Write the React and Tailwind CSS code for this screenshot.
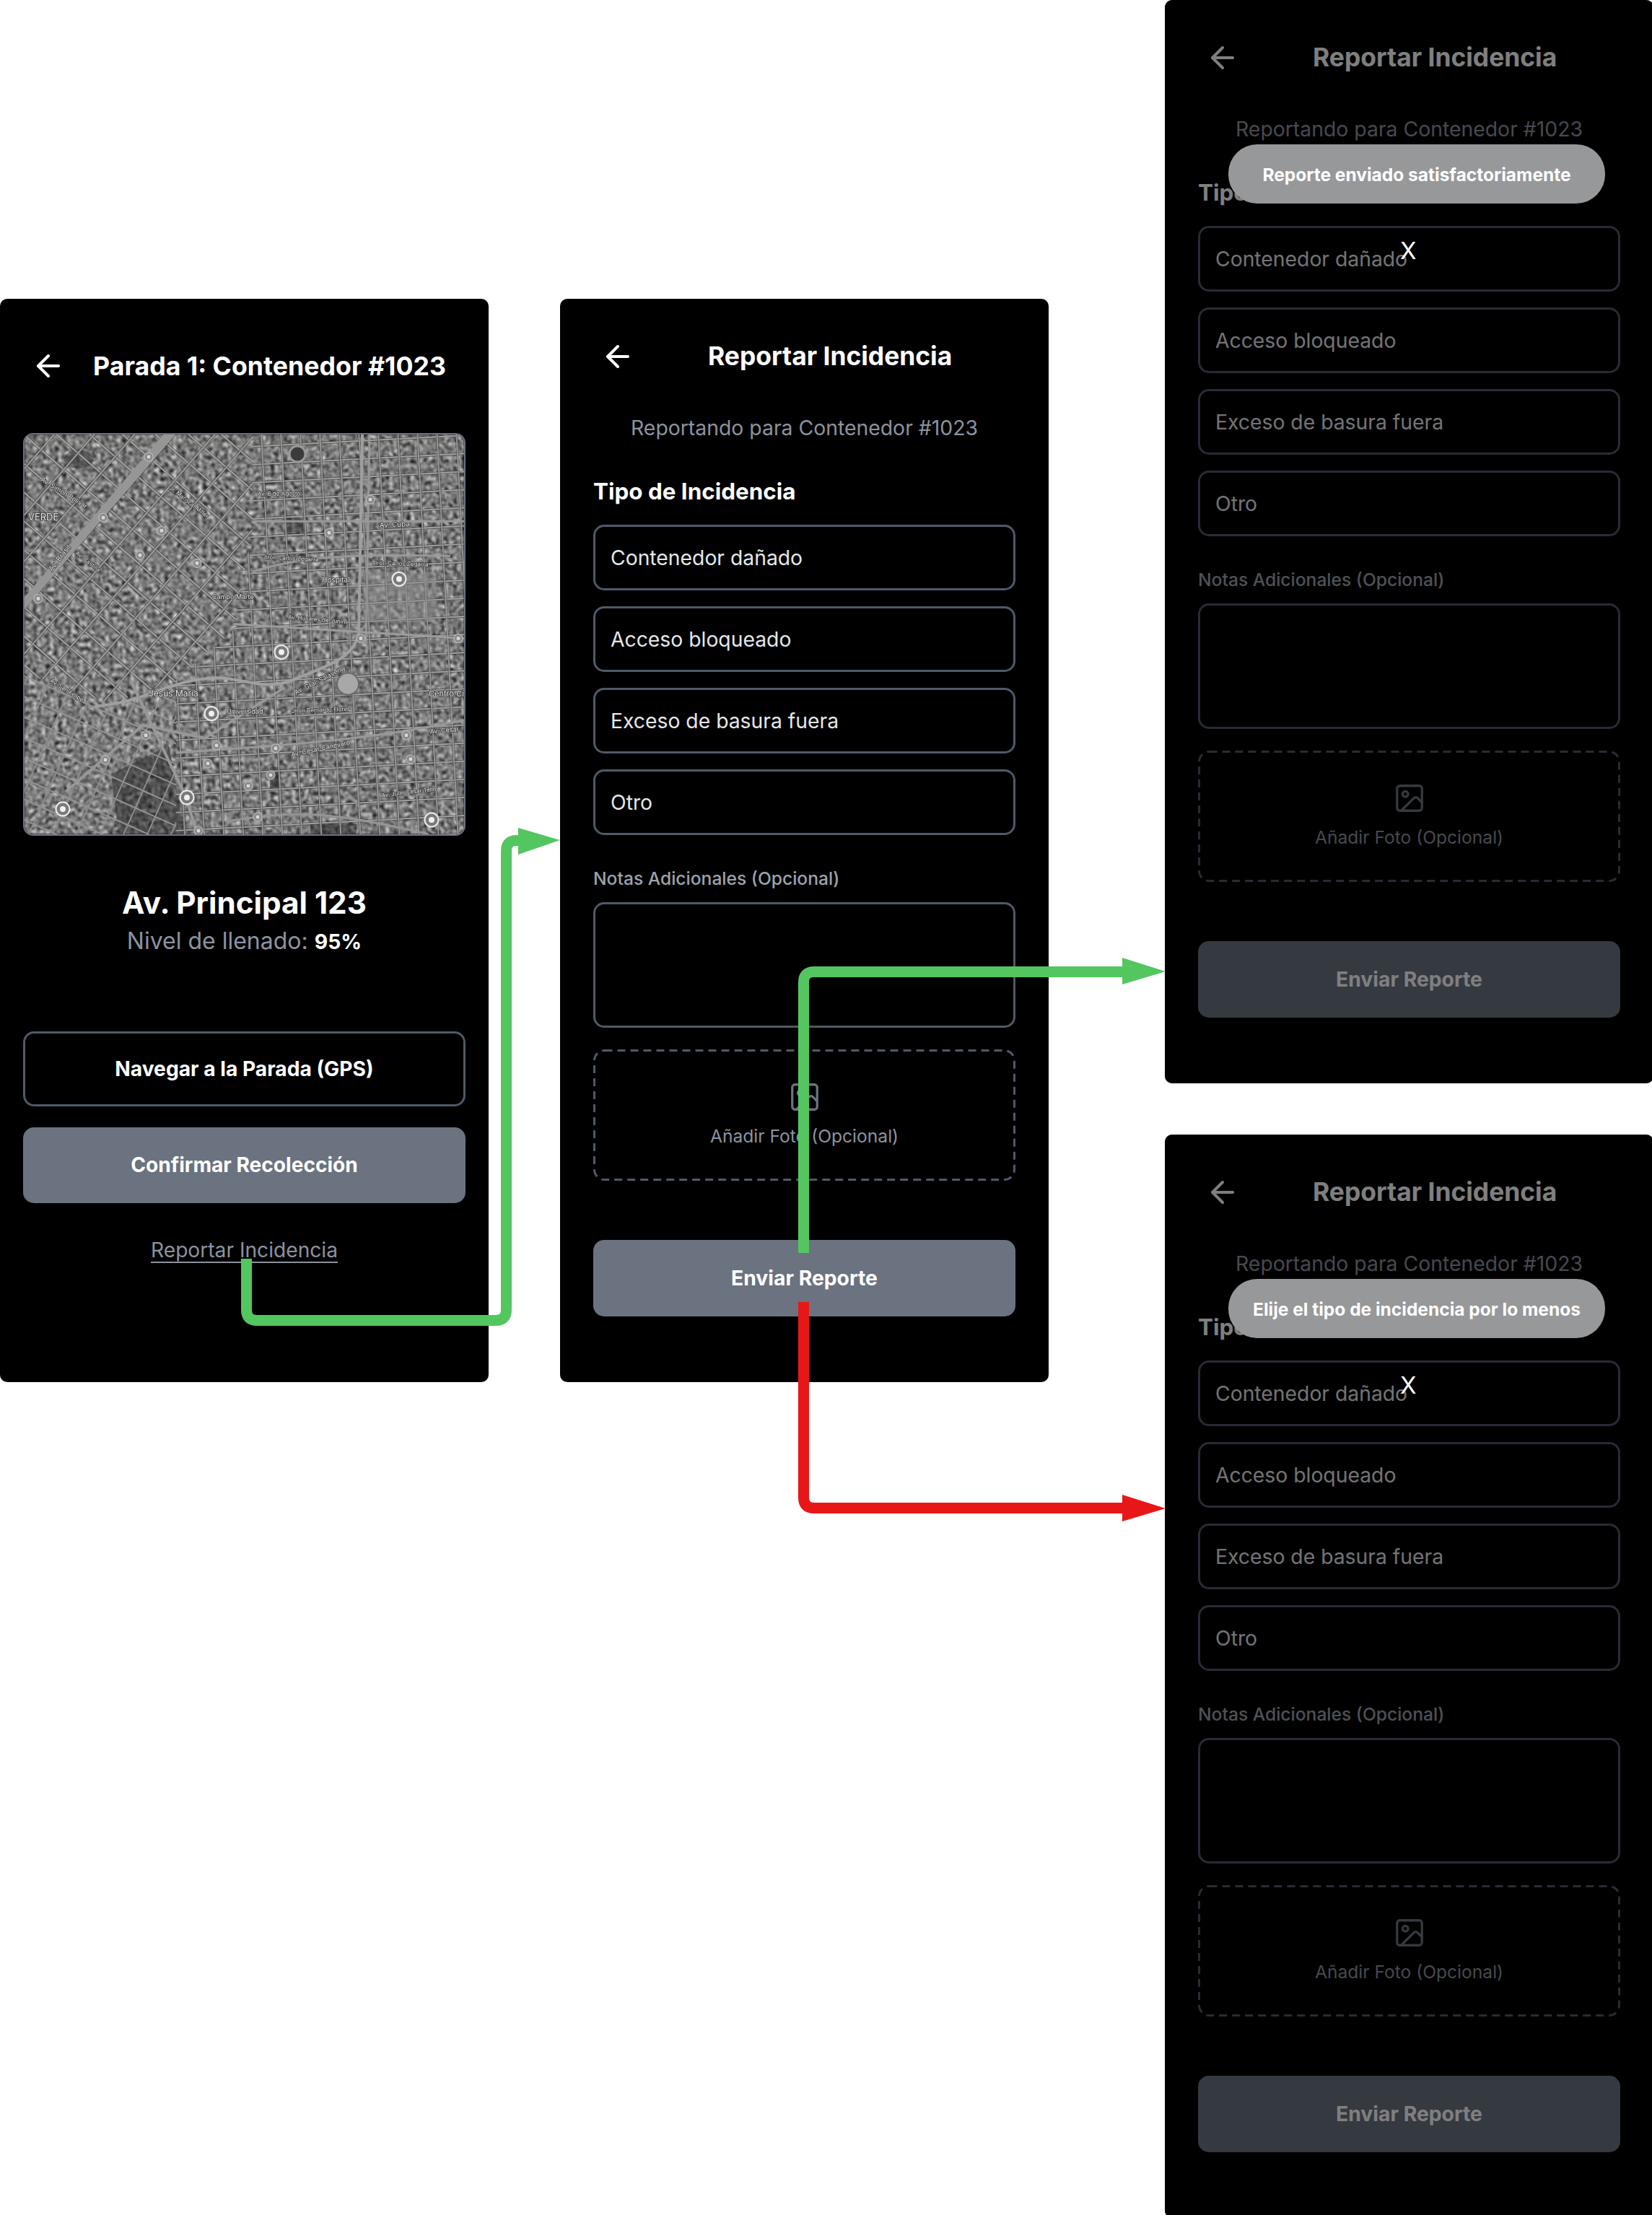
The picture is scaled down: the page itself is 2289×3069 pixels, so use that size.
import React from "react";
import { ArrowLeft, Image as ImageIcon } from "lucide-react";

const range = (a, b, s) => {
  const out = [];
  for (let v = a; v <= b; v += s) out.push(v);
  return out;
};

const bigPins = [[356, 301], [259, 386], [225, 502], [53, 518], [564, 533], [519, 200]];
const smallPins = [
  [172, 31], [109, 115], [190, 133], [160, 167], [239, 178], [19, 227], [479, 90], [422, 136], [466, 282],
  [601, 282], [168, 416], [266, 430], [348, 434], [254, 455], [341, 471], [310, 486], [323, 529], [241, 548],
  [112, 450], [529, 416], [535, 449],
];
const labels = [
  ["VERDE", 5, 119, 0, 13],
  ["Av. Brasil", 38, 190, -52, 10],
  ["Av. Simón Bolívar", 22, 64, 32, 9],
  ["Av. Castilla", 70, 165, 38, 8],
  ["Jr. Mariscal Miller", 200, 75, 38, 8],
  ["Av. 6 de Agosto", 323, 85, 0, 8],
  ["Jirón Carlos Zegarra", 330, 172, 3, 8],
  ["Jirón Carlos Zegarra", 482, 180, 2, 8],
  ["Av. Cuba", 492, 129, -3, 10],
  ["Av. Húsares de Junín", 365, 255, 5, 8],
  ["Jesús María", 172, 362, 0, 12],
  ["Av. San Felipe", 35, 342, 32, 8],
  ["Av. Gral. Salaverry", 376, 360, -27, 9],
  ["Jirón Bernardo Flores", 370, 385, -2, 8],
  ["Av. César Canevaro", 370, 446, -12, 9],
  ["Av. César", 562, 414, -5, 9],
  ["Av. Julio César Tello", 495, 502, -7, 8],
  ["Centro Cí", 560, 362, 0, 11],
  ["Campo Marte", 260, 228, 0, 9],
  ["Universidad", 280, 386, 0, 9],
  ["Hospital", 412, 205, 0, 10],
];

function CityMap() {
  return (
    <svg viewBox="0 0 609 553" className="block w-full h-full" preserveAspectRatio="none">
      <defs>
        <filter id="blocks" x="0" y="0" width="100%" height="100%" colorInterpolationFilters="sRGB">
          <feTurbulence type="fractalNoise" baseFrequency="0.17" numOctaves="2" seed="23" />
          <feColorMatrix values="0.78 0.78 0 0 -0.3  0.78 0.78 0 0 -0.3  0.78 0.78 0 0 -0.3  0 0 0 0 1" />
          <feGaussianBlur stdDeviation="1" />
        </filter>
        <filter id="soft" x="-5%" y="-5%" width="110%" height="110%">
          <feGaussianBlur stdDeviation="0.45" />
        </filter>
        <clipPath id="west">
          <polygon points="0,0 316,0 316,130 290,270 210,340 120,372 0,330" />
        </clipPath>
        <clipPath id="east">
          <polygon points="316,0 609,0 609,553 210,553 210,340 290,270 316,130" />
        </clipPath>
        <clipPath id="south">
          <polygon points="0,330 120,372 210,340 210,553 0,553" />
        </clipPath>
      </defs>
      <rect width="609" height="553" fill="#777" filter="url(#blocks)" />
      <g fill="#1d1d1d" opacity="0.45" filter="url(#soft)">
        <ellipse cx="75" cy="34" rx="20" ry="13" fill="#2f2f2f" opacity="1" />
        <polygon points="120,470 200,430 222,553 130,553" />
        <rect x="396" y="538" width="64" height="18" />
        <rect x="340" y="460" width="14" height="32" />
        <rect x="362" y="115" width="24" height="20" />
      </g>
      <g filter="url(#soft)" fill="none">
        <g clipPath="url(#west)">
          <g transform="rotate(41 160 180)">
            {range(-300, 700, 30).map((v) => (
              <g key={`a${v}`}>
                <line x1="-300" x2="700" y1={v} y2={v} stroke="#2f2f2f" strokeWidth="4" opacity="0.5" />
                <line x1="-300" x2="700" y1={v} y2={v} stroke="#a0a0a0" strokeWidth="2.2" />
              </g>
            ))}
            {range(-300, 700, 42).map((v) => (
              <g key={`b${v}`}>
                <line y1="-300" y2="700" x1={v} x2={v} stroke="#2f2f2f" strokeWidth="4" opacity="0.5" />
                <line y1="-300" y2="700" x1={v} x2={v} stroke="#9a9a9a" strokeWidth="2.2" />
              </g>
            ))}
          </g>
        </g>
        <g clipPath="url(#east)">
          <g transform="rotate(-3 450 280)">
            {range(-40, 620, 25).map((v) => (
              <g key={`c${v}`}>
                <line x1="100" x2="720" y1={v} y2={v} stroke="#2f2f2f" strokeWidth="3.8" opacity="0.5" />
                <line x1="100" x2="720" y1={v} y2={v} stroke="#a0a0a0" strokeWidth="2" />
              </g>
            ))}
            {range(100, 720, 27).map((v) => (
              <g key={`d${v}`}>
                <line y1="-50" y2="620" x1={v} x2={v} stroke="#2f2f2f" strokeWidth="3.6" opacity="0.5" />
                <line y1="-50" y2="620" x1={v} x2={v} stroke="#989898" strokeWidth="1.9" />
              </g>
            ))}
          </g>
        </g>
        <g clipPath="url(#south)">
          <g transform="rotate(24 100 440)">
            {range(280, 640, 26).map((v) => (
              <line key={`e${v}`} x1="-200" x2="420" y1={v} y2={v} stroke="#949494" strokeWidth="2" />
            ))}
            {range(-180, 400, 30).map((v) => (
              <line key={`f${v}`} y1="200" y2="700" x1={v} x2={v} stroke="#8e8e8e" strokeWidth="2" />
            ))}
          </g>
        </g>
        <path d="M205 -6 L-4 238" stroke="#969696" strokeWidth="11" />
        <path d="M97 376 C170 370 200 340 258 337 C300 334 330 356 370 340 C420 320 455 310 463 276 L468 0" stroke="#a0a0a0" strokeWidth="4" />
        <path d="M478 0 L473 290" stroke="#989898" strokeWidth="3" />
        <path d="M57 494 L164 402 L250 420 L360 350" stroke="#989898" strokeWidth="3.6" />
        <path d="M147 340 L222 498 L240 553" stroke="#989898" strokeWidth="4" />
        <path d="M316 120 H609" stroke="#989898" strokeWidth="3.2" />
        <path d="M316 190 C380 168 460 165 590 168" stroke="#989898" strokeWidth="3" />
        <path d="M290 262 L609 282" stroke="#9c9c9c" strokeWidth="3" />
        <path d="M210 440 C320 432 470 425 609 395" stroke="#989898" strokeWidth="3.2" />
        <path d="M280 535 C380 520 420 520 560 553" stroke="#949494" strokeWidth="3" />
        <circle cx="378" cy="27" r="11" stroke="#9a9a9a" strokeWidth="3" fill="#3b3b3b" />
        <circle cx="448" cy="345" r="15" fill="#a8a8a8" stroke="#6a6a6a" strokeWidth="2" />
        <rect x="470" y="190" width="100" height="70" fill="#8c8c8c" opacity="0.5" />
      </g>
      {smallPins.map(([x, y]) => (
        <g key={`${x}-${y}`}>
          <circle cx={x} cy={y} r="6" fill="#8b8b8b" stroke="#b8b8b8" strokeWidth="1.2" />
          <rect x={x - 2.2} y={y - 2.2} width="4.4" height="4.4" rx="1" fill="#d8d8d8" />
        </g>
      ))}
      {bigPins.map(([x, y]) => (
        <g key={`${x}-${y}`}>
          <circle cx={x} cy={y} r="9.5" fill="#7a7a7a" stroke="#e8e8e8" strokeWidth="2.2" />
          <circle cx={x} cy={y} r="4" fill="#f0f0f0" />
        </g>
      ))}
      {labels.map(([t, x, y, rot, size]) => (
        <text
          key={`${t}${x}`}
          x={x}
          y={y}
          transform={`rotate(${rot} ${x} ${y})`}
          fontSize={size}
          fill="#e4e4e4"
          stroke="#3a3a3a"
          strokeWidth="1.6"
          paintOrder="stroke"
          fontFamily="Inter, sans-serif"
        >
          {t}
        </text>
      ))}
    </svg>
  );
}

function Panel({ className, children }) {
  return <div className={`absolute w-[677px] h-[1501px] bg-black rounded-[10px] overflow-hidden ${className}`}>{children}</div>;
}

function RouteScreen() {
  return (
    <Panel className="left-0 top-[414px]">
      <div className="flex items-center gap-[38px] pl-[43px] pt-[69px]">
        <ArrowLeft size={48} strokeWidth={2} className="text-white shrink-0" />
        <h1 className="text-[35.7px] leading-[48px] font-bold text-white whitespace-nowrap">Parada 1: Contenedor #1023</h1>
      </div>
      <div className="mx-[32px] mt-[69px] h-[558px] border-2 border-[#6b7280] rounded-[14px] overflow-hidden">
        <CityMap />
      </div>
      <h2 className="mt-[68px] text-center text-[42.2px] leading-[50px] font-bold text-white">Av. Principal 123</h2>
      <p className="mt-[10px] text-center text-[32px] leading-[36px] text-[#8c93a0]">
        Nivel de llenado: <span className="text-[28.4px] font-bold text-white">95%</span>
      </p>
      <div className="mx-[32px] mt-[106px] flex flex-col gap-[29px]">
        <div className="h-[104px] flex items-center justify-center border-[3px] border-[#4f5968] rounded-[15px] text-[28.2px] font-bold text-white">
          Navegar a la Parada (GPS)
        </div>
        <div className="h-[105px] flex items-center justify-center bg-[#6b7280] rounded-[15px] text-[28.1px] font-bold text-white">
          Confirmar Recolección
        </div>
      </div>
      <p className="mt-[47px] text-center text-[28.15px] leading-[36px] text-[#8c93a0] underline underline-offset-[6px]">Reportar Incidencia</p>
    </Panel>
  );
}

const options = ["Contenedor dañado", "Acceso bloqueado", "Exceso de basura fuera", "Otro"];

function ReportScreen({ className, toast }) {
  return (
    <Panel className={className}>
      <div className="flex items-center gap-[101px] pl-[56px] pt-[56px]">
        <ArrowLeft size={48} strokeWidth={2} className="text-white shrink-0" />
        <h1 className="text-[35.4px] leading-[48px] font-bold text-white whitespace-nowrap">Reportar Incidencia</h1>
      </div>
      <p className="mt-[57px] text-center text-[28.36px] leading-[36px] text-[#8c93a0]">Reportando para Contenedor #1023</p>
      <h3 className="mt-[50px] ml-[46px] text-[31.4px] leading-[40px] font-bold text-white">Tipo de Incidencia</h3>
      <div className="mx-[46px] mt-[26px] flex flex-col gap-[22px]">
        {options.map((o) => (
          <div key={o} className="h-[91px] flex items-center pl-[21px] pt-[2px] border-[3px] border-[#4f5968] rounded-[15px] text-[28.3px] text-[#e5e7eb]">
            {o}
          </div>
        ))}
      </div>
      <p className="mt-[45px] ml-[46px] text-[24.6px] leading-[30px] font-medium text-[#9ca3af]">Notas Adicionales (Opcional)</p>
      <div className="mx-[46px] mt-[18px] h-[174px] border-[3px] border-[#4f5968] rounded-[15px]" />
      <div className="relative mx-[46px] mt-[30px] h-[182px] pb-[4px] flex flex-col items-center justify-center gap-[16px]">
        <svg className="absolute inset-0" width="585" height="182" viewBox="0 0 585 182" fill="none">
          <rect x="1.5" y="1.5" width="582" height="179" rx="14" stroke="#4f5968" strokeWidth="3" strokeDasharray="11 7" />
        </svg>
        <ImageIcon size={46} strokeWidth={1.7} className="text-[#6b7280]" />
        <span className="text-[24.6px] leading-[30px] text-[#8c93a0]">Añadir Foto (Opcional)</span>
      </div>
      <div className="mx-[46px] mt-[82px] h-[106px] flex items-center justify-center bg-[#6b7280] rounded-[15px] text-[28.3px] font-bold text-white">
        Enviar Reporte
      </div>
      {toast && (
        <>
          <div className="absolute inset-0 bg-black/50" />
          <div className="absolute left-[88px] top-[200px] w-[522px] h-[82px] pt-[2px] flex items-center justify-center rounded-[40px] bg-[#97989a] text-[24.5px] font-bold text-white whitespace-nowrap">
            {toast}
          </div>
          <span className="absolute left-[326px] top-[327px] text-[33px] leading-[40px] text-white">X</span>
        </>
      )}
    </Panel>
  );
}

function Connectors() {
  return (
    <svg className="absolute left-0 top-0 pointer-events-none" width="2289" height="3069" viewBox="0 0 2289 3069" fill="none">
      <path d="M341.5 1744V1815Q341.5 1829.5 356 1829.5H687Q701.5 1829.5 701.5 1815V1179Q701.5 1164.5 716 1164.5H722" stroke="#53c660" strokeWidth="15" />
      <polygon points="718,1147 776,1164 718,1184" fill="#53c660" />
      <path d="M1113.5 1804V2075Q1113.5 2089.5 1128 2089.5H1558" stroke="#e81717" strokeWidth="15" />
      <polygon points="1555,2071 1615,2090 1555,2108" fill="#e81717" />
      <path d="M1113.5 1736V1361Q1113.5 1346.5 1128 1346.5H1558" stroke="#53c660" strokeWidth="15" />
      <polygon points="1555,1327 1615,1346 1555,1364" fill="#53c660" />
    </svg>
  );
}

export default function App() {
  return (
    <div className="relative w-[2289px] h-[3069px] overflow-hidden bg-white [font-family:Inter,sans-serif]">
      <RouteScreen />
      <ReportScreen className="left-[776px] top-[414px]" />
      <ReportScreen className="left-[1614px] top-0" toast="Reporte enviado satisfactoriamente" />
      <ReportScreen className="left-[1614px] top-[1572px]" toast="Elije el tipo de incidencia por lo menos" />
      <Connectors />
    </div>
  );
}
